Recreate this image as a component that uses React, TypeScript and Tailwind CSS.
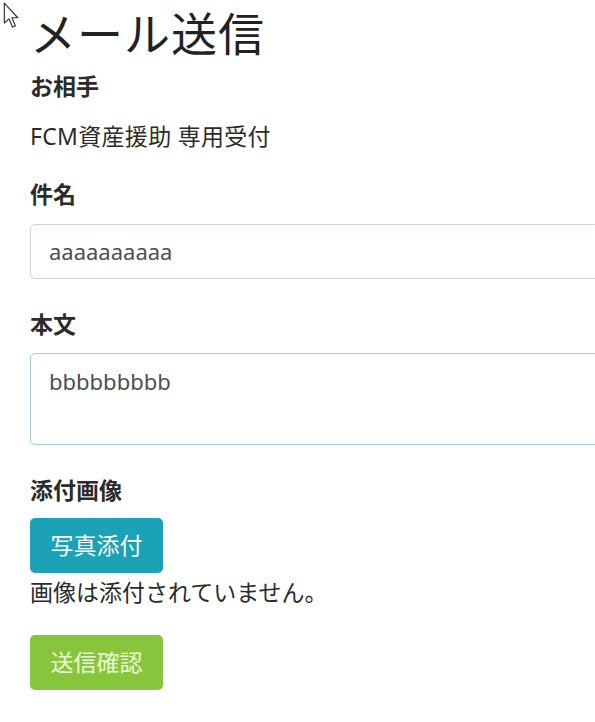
import React from 'react'

const font = "font-['Noto_Sans','Noto_Sans_CJK_JP',sans-serif]"

const Cursor: React.FC = () => (
  <svg
    className="absolute left-[3px] top-[2px]"
    width="19"
    height="28"
    viewBox="0 0 16 24"
  >
    <path
      d="M1 1 L1 18 L5 14.5 L8 21.5 L10.5 20.5 L7.5 13.5 L12.5 13.5 Z"
      fill="#fff"
      stroke="#333"
      strokeWidth="1"
      strokeLinejoin="round"
    />
  </svg>
)

const Label: React.FC<{ children: React.ReactNode; className?: string }> = ({
  children,
  className,
}) => (
  <div
    className={`h-[30px] text-[23px] leading-[30px] font-bold text-[#2b2b2b] ${className}`}
  >
    {children}
  </div>
)

const App: React.FC = () => (
  <div
    className={`relative w-[595px] h-[722px] overflow-hidden bg-white ${font}`}
  >
    <Cursor />
    <div className="pl-[30px]">
      <h1 className="text-[46px] leading-[66px] font-normal text-[#222] tracking-[1px]">
        メール送信
      </h1>

      <Label className="mt-[5px]">お相手</Label>
      <div className="mt-[20px] h-[30px] text-[23px] leading-[30px] text-[#2b2b2b] tracking-[0.3px]">
        FCM資産援助 専用受付
      </div>

      <Label className="mt-[28px]">件名</Label>
      <div className="mt-[15px] w-[640px] h-[55px] border border-[#cfd4d9] rounded-[5px] pl-[18px] flex items-center text-[22px] text-[#4a4f55]">
        aaaaaaaaaa
      </div>

      <Label className="mt-[30px]">本文</Label>
      <div className="mt-[14px] w-[640px] h-[92px] border border-[#a9c8e6] rounded-[5px] pl-[18px] pt-[12px] text-[22px] leading-[30px] text-[#4a4f55]">
        bbbbbbbbb
      </div>

      <Label className="mt-[30px]">添付画像</Label>
      <button className="mt-[13px] w-[133px] h-[55px] rounded-[5px] bg-[#1ba2b6] text-white text-[23px] flex items-center justify-center">
        写真添付
      </button>
      <div className="mt-[4px] h-[30px] text-[23px] leading-[30px] text-[#2b2b2b]">
        画像は添付されていません。
      </div>

      <button className="mt-[28px] w-[133px] h-[55px] rounded-[5px] bg-[#86c53c] text-[#eafbd8] text-[23px] flex items-center justify-center">
        送信確認
      </button>
    </div>
  </div>
)

export default App
